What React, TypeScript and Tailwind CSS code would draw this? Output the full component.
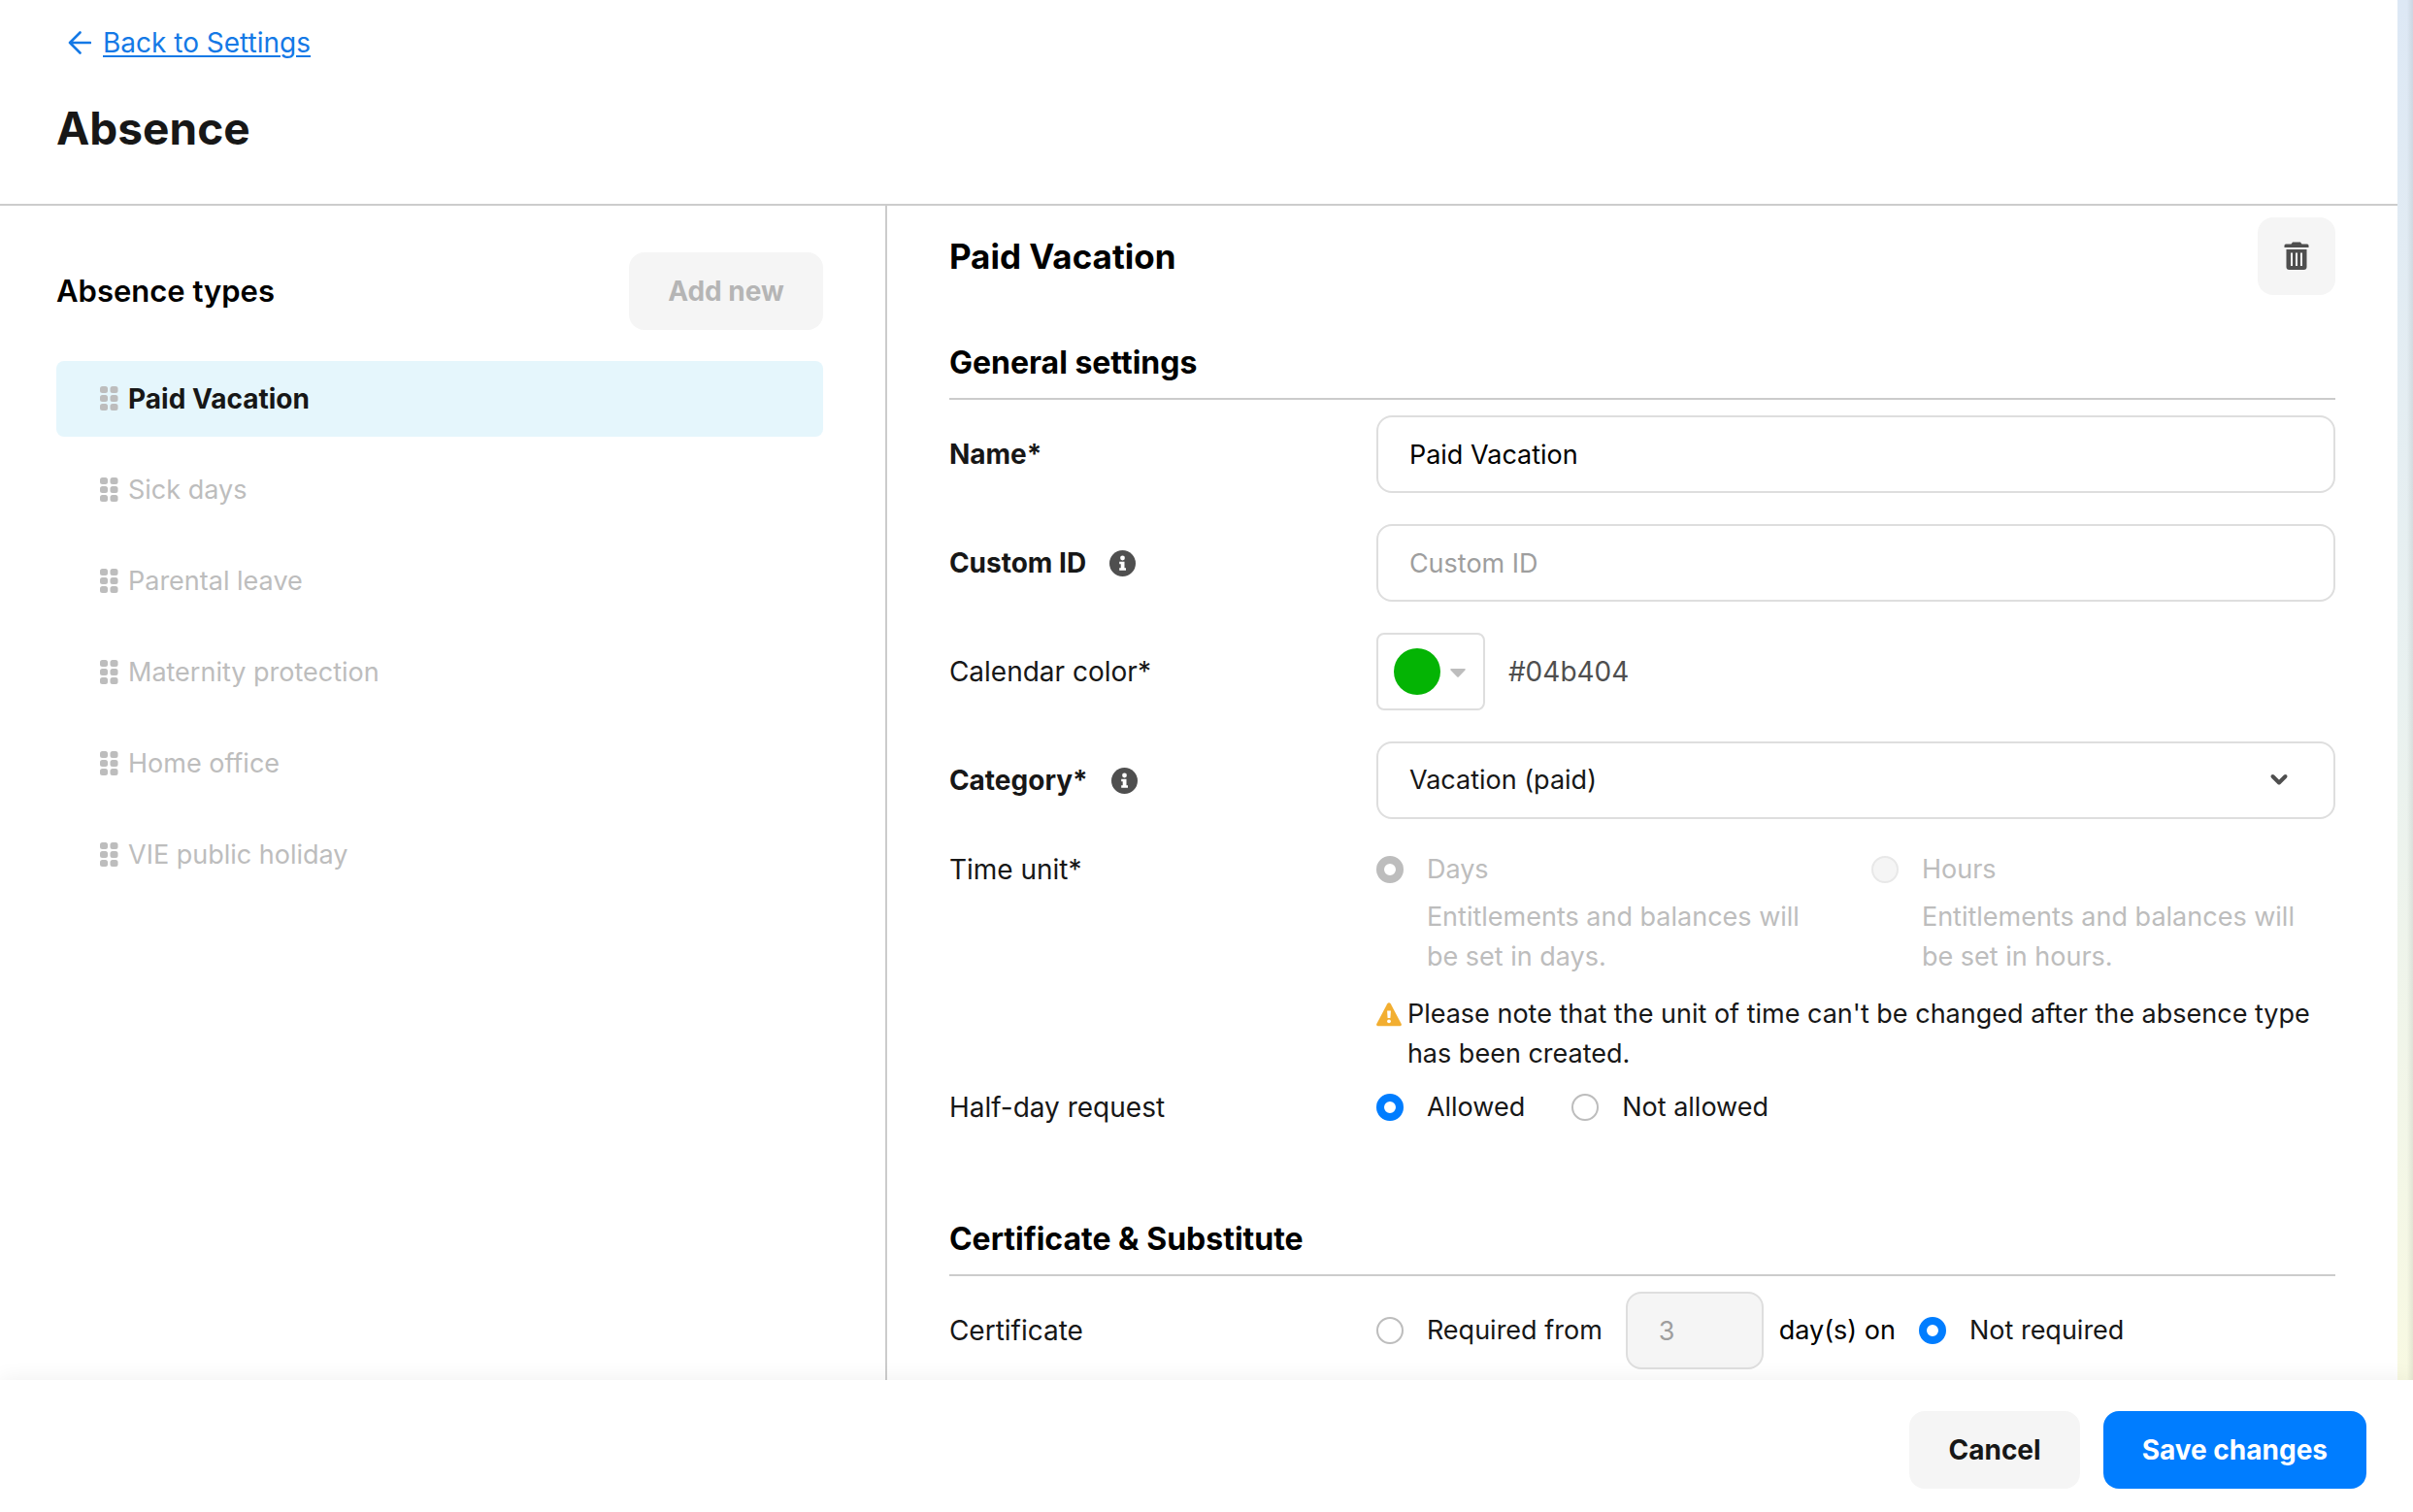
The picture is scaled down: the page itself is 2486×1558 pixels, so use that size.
import type { ReactNode } from "react";

const absenceTypes = [
  "Paid Vacation",
  "Sick days",
  "Parental leave",
  "Maternity protection",
  "Home office",
  "VIE public holiday",
];

function ArrowLeftIcon() {
  return (
    <svg className="h-6 w-6 shrink-0" viewBox="0 0 24 24" fill="none" aria-hidden>
      <path
        d="M12.5 1.5 2 12l10.5 10.5M2 12h21"
        stroke="currentColor"
        strokeWidth="2.6"
        strokeLinecap="round"
        strokeLinejoin="round"
      />
    </svg>
  );
}

function GripIcon() {
  return (
    <svg className="h-[26px] w-5 shrink-0 text-[#bdbdbd]" viewBox="0 0 20 26" fill="currentColor" aria-hidden>
      {[0, 9, 18].map((y) => (
        <g key={y}>
          <rect x="1" y={y} width="8" height="7" rx="2.5" />
          <rect x="11.5" y={y} width="8" height="7" rx="2.5" />
        </g>
      ))}
    </svg>
  );
}

function TrashIcon() {
  return (
    <svg className="h-[30px] w-[26px]" viewBox="0 0 26 30" aria-hidden>
      <path
        d="M9 .5h8l1.5 2H24A1.500 1.500 0 0 1 25.500 4v2H.5V4A1.500 1.500 0 0 1 2 2.500h5.500z"
        fill="#4f4f4f"
      />
      <path d="M2.500 8h21v18a3 3 0 0 1-3 3h-15a3 3 0 0 1-3-3z" fill="#4f4f4f" />
      <path d="M8 11.500v13.500M13 11.500v13.500M18 11.500v13.500" stroke="#f5f5f5" strokeWidth="2" />
    </svg>
  );
}

function InfoIcon() {
  return (
    <svg className="h-[27px] w-[27px] shrink-0" viewBox="0 0 27 27" aria-hidden>
      <circle cx="13.500" cy="13.500" r="13.500" fill="#4f4f4f" />
      <circle cx="13.500" cy="8" r="2.400" fill="#fff" />
      <path d="M10.200 11.800h5.300v6.500h1.500v2.500h-6.800v-2.500h1.500v-4h-1.500z" fill="#fff" />
    </svg>
  );
}

function WarningIcon() {
  return (
    <svg className="mt-2 h-[26px] w-[26px] shrink-0" viewBox="0 0 26 26" aria-hidden>
      <path
        d="M11.300 2.200a2 2 0 0 1 3.400 0L25.700 23a1.500 1.500 0 0 1-1.300 2.200H1.600A1.500 1.500 0 0 1 .3 23z"
        fill="#f2ae30"
      />
      <path d="M11.100 9.500h3.800l-.5 7.500h-2.800z" fill="#fff" />
      <circle cx="13" cy="20.300" r="1.900" fill="#fff" />
    </svg>
  );
}

type RadioProps = {
  id: string;
  name: string;
  label: string;
  hint?: string;
  checked?: boolean;
  disabled?: boolean;
};

function Radio({ id, name, label, hint, checked = false, disabled = false }: RadioProps) {
  return (
    <div className="flex gap-6">
      <div className="flex h-10 items-center">
        <input
          type="radio"
          id={id}
          name={name}
          defaultChecked={checked}
          disabled={disabled}
          className="h-7 w-7 shrink-0 appearance-none rounded-full border-2 border-[#bdbdbd] bg-white checked:border-8 checked:border-[#007dff] disabled:border-[#e8e8e8] disabled:bg-[#f5f5f5] disabled:checked:border-[#bdbdbd] disabled:checked:bg-white"
        />
      </div>
      <label htmlFor={id} className={disabled ? "text-[#bdbdbd]" : ""}>
        <span className="block leading-10">{label}</span>
        {hint && <span className="mt-2 block pr-5 leading-[41px]">{hint}</span>}
      </label>
    </div>
  );
}

type FieldRowProps = {
  label: string;
  htmlFor?: string;
  bold?: boolean;
  info?: boolean;
  top?: boolean;
  children: ReactNode;
};

function FieldRow({ label, htmlFor, bold = false, info = false, top = false, children }: FieldRowProps) {
  return (
    <div className={`grid grid-cols-[440px_minmax(0,1fr)] ${top ? "items-start" : "items-center"}`}>
      <div className="flex items-center gap-6 text-[28px] leading-10">
        <label htmlFor={htmlFor} className={bold ? "font-bold" : ""}>
          {label}
        </label>
        {info && <InfoIcon />}
      </div>
      {children}
    </div>
  );
}

function SectionHeading({ children }: { children: ReactNode }) {
  return (
    <h3 className="border-b-2 border-[#cccccc] pb-4 text-[32px] leading-10 font-bold text-black">
      {children}
    </h3>
  );
}

export default function App() {
  return (
    <div className="flex h-screen flex-col overflow-hidden bg-white font-['Inter',sans-serif] text-[27px] text-[#171717]">
      <div className="flex min-h-0 flex-1">
        <div className="flex min-w-0 flex-1 flex-col">
          <header className="border-b-2 border-[#cccccc] pt-6 pr-16 pb-[50px] pl-[58px]">
            <a href="#settings" className="flex w-fit items-center gap-3 pl-3 text-[28px] leading-10 text-[#1479e6]">
              <ArrowLeftIcon />
              <span className="underline decoration-2 underline-offset-[3px]">Back to Settings</span>
            </a>
            <h1 className="mt-10 text-[46px] leading-14 font-bold">Absence</h1>
          </header>

          <div className="flex min-h-0 flex-1">
            <aside className="w-[37%] shrink-0 border-r-2 border-[#cccccc] pt-12 pr-16 pl-[58px]">
              <div className="flex items-center justify-between">
                <h2 className="text-[31px] font-semibold text-black">Absence types</h2>
                <button
                  type="button"
                  disabled
                  className="h-20 rounded-2xl bg-[#f5f5f5] px-10 text-[28px] font-bold text-[#b5b5b5]"
                >
                  Add new
                </button>
              </div>
              <ul className="mt-8 flex flex-col gap-4">
                {absenceTypes.map((type, index) => (
                  <li key={type}>
                    <button
                      type="button"
                      className={`flex h-[78px] w-full items-center gap-2.5 rounded-lg pl-11 text-left ${
                        index === 0 ? "bg-[#e5f6fc] text-[28px] font-bold" : "text-[#bdbdbd]"
                      }`}
                    >
                      <GripIcon />
                      {type}
                    </button>
                  </li>
                ))}
              </ul>
            </aside>

            <main className="min-w-0 flex-1 overflow-hidden px-16 pt-3">
              <div className="flex items-center justify-between">
                <h2 className="text-[35px] font-bold text-black">Paid Vacation</h2>
                <button
                  type="button"
                  aria-label="Delete absence type"
                  className="flex h-20 w-20 items-center justify-center rounded-2xl bg-[#f5f5f5]"
                >
                  <TrashIcon />
                </button>
              </div>

              <section className="mt-[50px]">
                <SectionHeading>General settings</SectionHeading>
                <div className="mt-4 flex flex-col gap-8">
                  <FieldRow label="Name*" htmlFor="name" bold>
                    <input
                      id="name"
                      type="text"
                      defaultValue="Paid Vacation"
                      className="h-20 w-full rounded-2xl border-2 border-[#dedede] px-8 text-black"
                    />
                  </FieldRow>
                  <FieldRow label="Custom ID" htmlFor="custom-id" bold info>
                    <input
                      id="custom-id"
                      type="text"
                      placeholder="Custom ID"
                      className="h-20 w-full rounded-2xl border-2 border-[#dedede] px-8 placeholder:text-[#9e9e9e]"
                    />
                  </FieldRow>
                  <FieldRow label="Calendar color*" htmlFor="calendar-color">
                    <div className="flex items-center gap-6">
                      <button
                        type="button"
                        id="calendar-color"
                        className="flex h-20 w-28 items-center gap-2.5 rounded-lg border-2 border-[#dedede] pl-4"
                      >
                        <span className="h-12 w-12 rounded-full bg-[#04b404]" />
                        <svg className="h-4 w-4" viewBox="0 0 16 16" aria-hidden>
                          <path d="M1 5h14a.8.8 0 0 1 .5 1.400L9 13.300a1.400 1.400 0 0 1-2 0L.5 6.400A.8.8 0 0 1 1 5z" fill="#bdbdbd" />
                        </svg>
                      </button>
                      <span className="text-[28px] text-[#4f4f4f]">#04b404</span>
                    </div>
                  </FieldRow>
                  <FieldRow label="Category*" htmlFor="category" bold info>
                    <div className="relative">
                      <select
                        id="category"
                        className="h-20 w-full appearance-none rounded-2xl border-2 border-[#dedede] bg-white px-8"
                      >
                        <option>Vacation (paid)</option>
                      </select>
                      <svg
                        className="pointer-events-none absolute top-1/2 right-12 h-5 w-5 -translate-y-1/2"
                        viewBox="0 0 20 20"
                        fill="none"
                        aria-hidden
                      >
                        <path
                          d="m3.500 6 6.500 6.500L16.500 6"
                          stroke="#4f4f4f"
                          strokeWidth="4"
                          strokeLinecap="round"
                          strokeLinejoin="round"
                        />
                      </svg>
                    </div>
                  </FieldRow>
                  <FieldRow label="Time unit*" htmlFor="unit-days" top>
                    <div>
                      <div className="grid grid-cols-2 gap-8">
                        <Radio
                          id="unit-days"
                          name="time-unit"
                          label="Days"
                          hint="Entitlements and balances will be set in days."
                          checked
                          disabled
                        />
                        <Radio
                          id="unit-hours"
                          name="time-unit"
                          label="Hours"
                          hint="Entitlements and balances will be set in hours."
                          disabled
                        />
                      </div>
                      <p className="mt-[18px] flex gap-1.5 leading-[41px]">
                        <WarningIcon />
                        <span>
                          Please note that the unit of time can't be changed after the absence type has been
                          created.
                        </span>
                      </p>
                    </div>
                  </FieldRow>
                </div>
                <div className="mt-[15px]">
                  <FieldRow label="Half-day request" htmlFor="half-day-allowed">
                    <div className="flex items-center gap-12">
                      <Radio id="half-day-allowed" name="half-day" label="Allowed" checked />
                      <Radio id="half-day-not-allowed" name="half-day" label="Not allowed" />
                    </div>
                  </FieldRow>
                </div>
              </section>

              <section className="mt-24">
                <SectionHeading>Certificate &amp; Substitute</SectionHeading>
                <div className="mt-4">
                  <FieldRow label="Certificate" htmlFor="certificate-required">
                    <div className="flex items-center gap-6">
                      <Radio id="certificate-required" name="certificate" label="Required from" />
                      <div className="flex items-center gap-4">
                        <input
                          id="certificate-days"
                          type="text"
                          defaultValue="3"
                          disabled
                          className="h-20 w-[142px] rounded-2xl border-2 border-[#dedede] bg-[#f5f5f5] px-8 text-[#9e9e9e]"
                        />
                        <label htmlFor="certificate-days" className="text-black">
                          day(s) on
                        </label>
                      </div>
                      <Radio id="certificate-not-required" name="certificate" label="Not required" checked />
                    </div>
                  </FieldRow>
                </div>
              </section>
            </main>
          </div>
        </div>

        {/* backdrop showing past the panel's right edge */}
        <div className="w-4 shrink-0 bg-linear-to-b from-[#dde8f5] via-[#e9f1f0] to-[#f8f9e2]">
          <div className="h-full bg-linear-to-r from-transparent from-60% to-black/8" />
        </div>
      </div>

      <footer className="z-10 flex justify-end gap-6 bg-white pt-8 pr-12 pb-6 shadow-[0_-2px_20px_rgba(0,0,0,0.06)]">
        <button type="button" className="h-20 rounded-2xl bg-[#f5f5f5] px-10 text-[28px] font-bold">
          Cancel
        </button>
        <button type="button" className="h-20 rounded-2xl bg-[#007dff] px-10 text-[28px] font-bold text-white">
          Save changes
        </button>
      </footer>
    </div>
  );
}
